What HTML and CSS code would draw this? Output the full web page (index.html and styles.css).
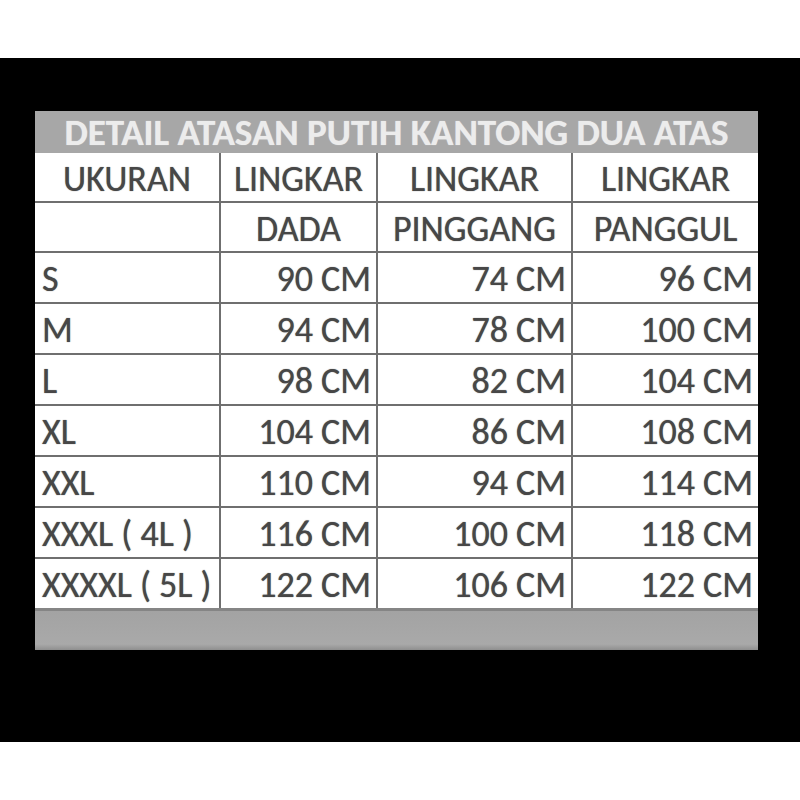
FILE: index.html
```html
<!DOCTYPE html>
<html lang="id">
<head>
<meta charset="utf-8">
<title>Detail Atasan Putih Kantong Dua Atas</title>
<link rel="stylesheet" href="styles.css">
</head>
<body>
<div class="frame">
  <div class="sheet">
    <div class="title">DETAIL ATASAN PUTIH KANTONG DUA ATAS</div>
    <div class="grid">
      <div class="cell head">UKURAN</div>
      <div class="cell head">LINGKAR</div>
      <div class="cell head">LINGKAR</div>
      <div class="cell head">LINGKAR</div>

      <div class="cell head"></div>
      <div class="cell head">DADA</div>
      <div class="cell head">PINGGANG</div>
      <div class="cell head">PANGGUL</div>

      <div class="cell size">S</div>
      <div class="cell num">90 CM</div>
      <div class="cell num">74 CM</div>
      <div class="cell num">96 CM</div>

      <div class="cell size">M</div>
      <div class="cell num">94 CM</div>
      <div class="cell num">78 CM</div>
      <div class="cell num">100 CM</div>

      <div class="cell size">L</div>
      <div class="cell num">98 CM</div>
      <div class="cell num">82 CM</div>
      <div class="cell num">104 CM</div>

      <div class="cell size">XL</div>
      <div class="cell num">104 CM</div>
      <div class="cell num">86 CM</div>
      <div class="cell num">108 CM</div>

      <div class="cell size">XXL</div>
      <div class="cell num">110 CM</div>
      <div class="cell num">94 CM</div>
      <div class="cell num">114 CM</div>

      <div class="cell size">XXXL ( 4L )</div>
      <div class="cell num">116 CM</div>
      <div class="cell num">100 CM</div>
      <div class="cell num">118 CM</div>

      <div class="cell size">XXXXL ( 5L )</div>
      <div class="cell num">122 CM</div>
      <div class="cell num">106 CM</div>
      <div class="cell num">122 CM</div>
    </div>
    <div class="footer"></div>
  </div>
</div>
</body>
</html>
```

FILE: styles.css
```css
html, body {
  margin: 0;
  padding: 0;
  background: #ffffff;
}

body {
  width: 800px;
  height: 800px;
  font-family: "Carlito", "Lato", "Liberation Sans", sans-serif;
}

.frame {
  margin-top: 58px;
  height: 684px;
  background: #000000;
  padding: 53px 0 0 35px;
  box-sizing: border-box;
}

.sheet {
  width: 723px;
}

.title {
  height: 42px;
  background: #a7a7a7;
  color: #ececec;
  font-weight: 700;
  font-size: 37px;
  display: flex;
  align-items: center;
  justify-content: center;
  white-space: nowrap;
  padding-top: 1px;
  box-sizing: border-box;
  text-shadow: 0 0 1px rgba(255, 255, 255, 0.6);
}

.grid {
  display: grid;
  grid-template-columns: 184px 155px 193px 185px;
  grid-template-rows: 48px 48px repeat(7, 49px);
  column-gap: 2px;
  row-gap: 2px;
  background: #6f6f6f;
}

.cell {
  background: #ffffff;
  color: #474747;
  font-size: 36px;
  display: flex;
  align-items: center;
  white-space: nowrap;
  padding-top: 3px;
  box-sizing: border-box;
  text-shadow: 0 0 1px rgba(40, 40, 40, 0.7);
}

.head {
  justify-content: center;
}

.size {
  padding-left: 7px;
}

.num {
  justify-content: flex-end;
  padding-right: 5px;
}

.footer {
  height: 42px;
  border-top: 3px solid #858585;
  background: linear-gradient(#a3a3a3, #a9a9a9 85%, #8f8f8f);
  box-sizing: border-box;
}
```
